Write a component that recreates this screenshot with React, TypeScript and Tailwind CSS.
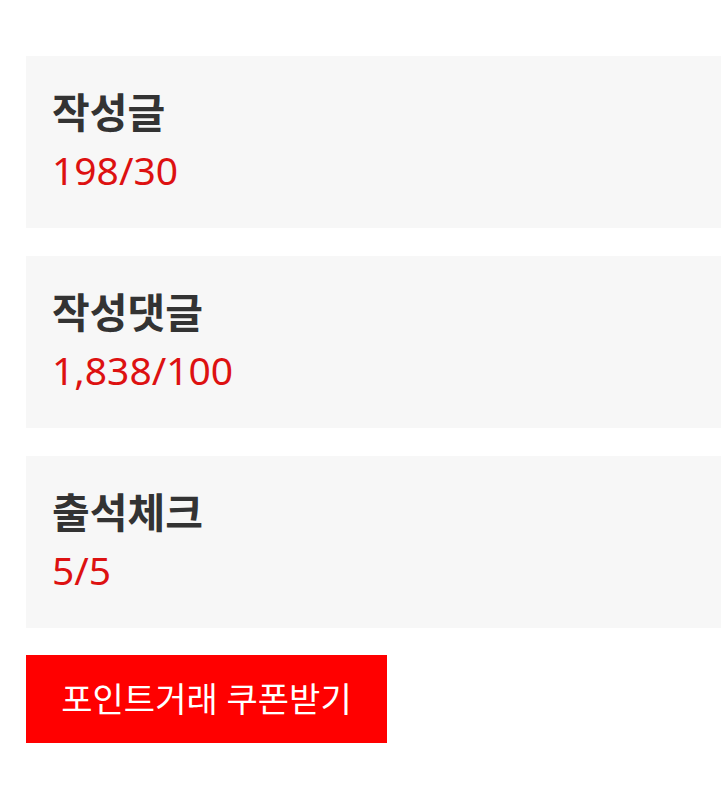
const stats = [
  { label: '작성글', value: '198/30' },
  { label: '작성댓글', value: '1,838/100' },
  { label: '출석체크', value: '5/5' },
]

export default function App() {
  return (
    <div
      className="min-h-screen bg-white pt-[56px] pl-[26px] pr-[1px]"
      style={{ fontFamily: '"Noto Sans", "Noto Sans CJK KR", sans-serif' }}
    >
      <div className="flex flex-col gap-[28px]">
        {stats.map((s) => (
          <div key={s.label} className="h-[172px] bg-[#f7f7f7] pl-[26px] pt-[27px]">
            <div className="text-[41px] leading-[58px] font-bold text-[#333333]">{s.label}</div>
            <div className="text-[39px] leading-[58px] text-[#dd1111]">{s.value}</div>
          </div>
        ))}
      </div>
      <button
        type="button"
        className="mt-[27px] h-[88px] w-[361px] bg-[#ff0000] text-[34px] text-white"
      >
        포인트거래 쿠폰받기
      </button>
    </div>
  )
}
